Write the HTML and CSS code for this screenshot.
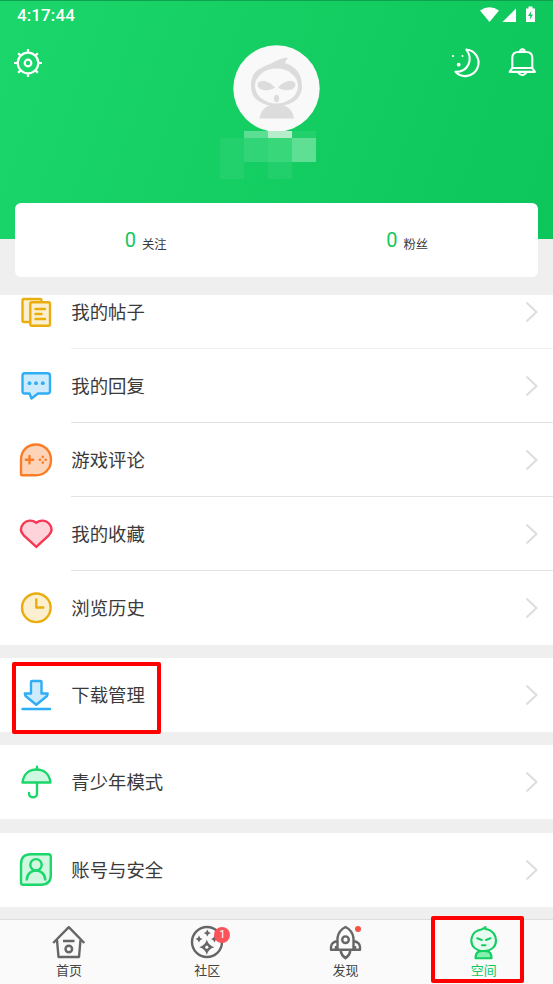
FILE: index.html
```html
<!DOCTYPE html>
<html lang="zh-CN">
<head>
<meta charset="utf-8">
<title>空间</title>
<link rel="stylesheet" href="styles.css">
</head>
<body>
<div class="app">
  <header class="hero">
    <div class="status">
      <span class="time">4:17:44</span>
      <svg class="status-icons" width="58" height="20" viewBox="0 0 58 20" fill="#fff">
        <path d="M0 4.600Q9.500-2.200 19 4.600L9.500 16Z"/>
        <path d="M22.500 16 36 2.500V16Z"/>
        <path d="M46 2.500h2.500V.500h4v2H55V16h-9Z"/>
        <path d="M51.500 4.500 48 10h2.300l-.800 4 3.600-5.500h-2.400Z" fill="#13c95f"/>
      </svg>
    </div>
    <div class="toolbar">
      <svg class="tool" width="30" height="30" viewBox="0 0 30 30" fill="none" stroke="#fff" stroke-width="2.200">
        <circle cx="15" cy="15" r="10.300"/><circle cx="15" cy="15" r="3.300"/>
        <path d="M15 1v4M15 25v4M1 15h4M25 15h4M5.200 5.200 7.600 7.600M22.400 22.400l2.400 2.400M5.200 24.800l2.400-2.400M22.400 7.600l2.400-2.400"/>
      </svg>
      <span class="tools-right">
        <svg width="32" height="32" viewBox="0 0 32 32" fill="none" stroke="#fff" stroke-width="2.100" stroke-linejoin="round">
          <path d="M16.300 2.500A13.300 13.300 0 1 1 5.500 24.800C17.500 25 24 13 16.300 2.500Z"/>
          <g fill="#fff" stroke="none"><circle cx="3" cy="9" r="1.100"/><circle cx="12.500" cy="9" r="1"/><circle cx="8.700" cy="17.700" r="1.900"/></g>
        </svg>
        <svg width="30" height="32" viewBox="0 0 30 32" fill="none" stroke="#fff" stroke-width="2.100" stroke-linejoin="round">
          <path d="M5.300 21V11Q5.300 5 11.300 5h8Q25.300 5 25.300 11V21L27.900 24.900H2.700L5.300 21H25.300M13 4.700a2.300 2.300 0 0 1 4.600 0M10.800 25.200q4.500 6 9 0"/>
        </svg>
      </span>
    </div>
    <svg class="avatar" width="102" height="135" viewBox="0 0 102 135">
      <circle cx="56.500" cy="43.500" r="43.200" fill="#f9f9f9"/>
      <path d="M39.500 73.500C40.500 64 48 59 56.500 59s16.500 5 17.500 14.500Z" fill="#dcdcdc"/>
      <path d="M31 41c0-16 10-18 21-23 6-3 12-6 16-5-1 2-3 3-3 5 9 3 17 9 17 23 0 14-12 20-25.500 20S31 55 31 41Z" fill="#dcdcdc"/>
      <ellipse cx="56.500" cy="41" rx="21.500" ry="17.500" fill="#f9f9f9"/>
      <path d="M55 42.500C48 35 41 35 38.500 37.500c-2 2-.500 6 3 7 4 1.500 10 .500 13.500-2ZM58 42.500C65 35 72 35 74.500 37.500c2 2 .500 6-3 7-4 1.500-10 .500-13.500-2Z" fill="#dcdcdc"/>
      <ellipse cx="56.500" cy="53.500" rx="2.600" ry="3.700" fill="#dcdcdc"/>
      <g fill="#fff" shape-rendering="crispEdges">
        <path d="M24 86h24v7H24Z" fill="#5bdf92"/><path d="M48 86h24v7H48Z" fill="#b6eccc"/><path d="M72 86h24v7H72Z" fill="#22d16c"/>
        <path d="M0 93h24v24H0Z" fill-opacity=".06"/><path d="M24 93h24v24H24Z" fill="#31d476"/><path d="M48 93h24v24H48Z" fill="#37d77a"/><path d="M72 93h24v24H72Z" fill="#5fdf94"/>
        <path d="M0 117h24v17H0ZM48 117h24v17H48Z" fill-opacity=".06"/>
      </g>
    </svg>
  </header>
  <section class="stats">
    <div class="stat"><b>0</b><span>关注</span></div>
    <div class="stat"><b>0</b><span>粉丝</span></div>
  </section>
  <main class="menu">
    <div class="group scrolled">
      <div class="row">
        <svg class="icon yellow" viewBox="0 0 40 40"><path d="M8 7h16q1.500 0 1.500 1.500V30H8q-1.500 0-1.500-1.500V8.500Q6.500 7 8 7Z"/><rect x="14.300" y="10.300" width="19.700" height="23.400" rx="1.500"/><path d="M19.500 17h9.500M19.500 22h6M19.500 27h9.500"/></svg>
        <span class="label">我的帖子</span><svg class="chevron" viewBox="0 0 12 20"><path d="m1.200 1.200 9.300 8.800-9.300 8.800"/></svg>
      </div>
      <div class="row">
        <svg class="icon blue" viewBox="0 0 40 40"><path d="M8.500 7.300h23q2.500 0 2.500 2.500V25q0 2.500-2.500 2.500H22l-6.500 5-2-5h-5Q6.500 27.500 6.500 25V9.800q0-2.500 2-2.500Z"/><g class="solid"><circle cx="13.500" cy="17.200" r="1.900"/><circle cx="20" cy="17.200" r="1.900"/><circle cx="26.800" cy="17.200" r="1.900"/></g></svg>
        <span class="label">我的回复</span><svg class="chevron" viewBox="0 0 12 20"><path d="m1.200 1.200 9.300 8.800-9.300 8.800"/></svg>
      </div>
      <div class="row">
        <svg class="icon orange" viewBox="0 0 40 40"><path d="M5 20C5 10.500 11.500 4.500 20 4.500S35 11 35 20s-6.500 15.300-15 15.300H6.200Q5 35.300 5 34Z"/><path d="M9.800 19.700h7.400M13.500 16V23.400"/><g class="solid"><circle cx="26.800" cy="16.800" r="1.300"/><circle cx="26.800" cy="22.600" r="1.300"/><circle cx="23.900" cy="19.700" r="1.300"/><circle cx="29.700" cy="19.700" r="1.300"/></g></svg>
        <span class="label">游戏评论</span><svg class="chevron" viewBox="0 0 12 20"><path d="m1.200 1.200 9.300 8.800-9.300 8.800"/></svg>
      </div>
      <div class="row">
        <svg class="icon red" viewBox="0 0 40 40"><path d="M20.300 8.700C16 5.500 10.500 6.200 7.500 9.500c-3.500 4-3 8.500.5 12.200L20.300 32.800 32.500 21.700c3.500-3.700 4-8.200.5-12.200-3-3.300-8.500-4-12.700-.8Z" stroke-linejoin="miter"/></svg>
        <span class="label">我的收藏</span><svg class="chevron" viewBox="0 0 12 20"><path d="m1.200 1.200 9.300 8.800-9.300 8.800"/></svg>
      </div>
      <div class="row">
        <svg class="icon yellow" viewBox="0 0 40 40"><circle cx="20.300" cy="19.800" r="14.300"/><path class="line" d="M20.300 11.500v8h7"/></svg>
        <span class="label">浏览历史</span><svg class="chevron" viewBox="0 0 12 20"><path d="m1.200 1.200 9.300 8.800-9.300 8.800"/></svg>
      </div>
    </div>
    <div class="group">
      <div class="row">
        <svg class="icon blue" viewBox="0 0 40 40"><path d="M16 6h8.500q1 0 1 1v11.500h6.200L31 21 20.300 29.800 9.500 21l-.7-2.500H15V7q0-1 1-1Z"/><path d="M6.500 34h27.500"/></svg>
        <span class="label">下载管理</span><svg class="chevron" viewBox="0 0 12 20"><path d="m1.200 1.200 9.300 8.800-9.300 8.800"/></svg>
      </div>
    </div>
    <div class="group">
      <div class="row">
        <svg class="icon green" viewBox="0 0 40 40"><path d="M6.500 20.500C7.500 12 13 7.500 20.500 7.500S33.500 12 34.500 20.500Z"/><path class="line" d="M21 4.800v2.700M21 21v10.500c0 5-8 5-8 0v-.5"/></svg>
        <span class="label">青少年模式</span><svg class="chevron" viewBox="0 0 12 20"><path d="m1.200 1.200 9.300 8.800-9.300 8.800"/></svg>
      </div>
    </div>
    <div class="group">
      <div class="row">
        <svg class="icon green" viewBox="0 0 40 40"><path d="M15 4.300h17.500q2.300 0 2.300 2.300V25Q34.800 34.800 25 34.800H7.300Q5 34.800 5 32.500V14Q5 4.300 15 4.300Z"/><circle cx="20" cy="14.800" r="5.700"/><path class="line" d="M10.800 29.500c.7-12 17.700-12 18.400 0"/></svg>
        <span class="label">账号与安全</span><svg class="chevron" viewBox="0 0 12 20"><path d="m1.200 1.200 9.300 8.800-9.300 8.800"/></svg>
      </div>
    </div>
  </main>
  <nav class="tabs">
    <div class="tab">
      <svg class="tab-icon" viewBox="0 0 36 36"><path d="M2.200 19 17.800 3.200 33.300 19M6 16l1.500 17H28l1.500-17M12 17h11.500"/><circle cx="17.800" cy="25" r="3.300"/></svg>
      <span>首页</span>
    </div>
    <div class="tab">
      <svg class="tab-icon" viewBox="0 0 36 36"><circle cx="18" cy="18" r="15"/><path class="star" d="M18.300 5.500q.6 2.900 3.500 3.500-2.900.6-3.500 3.500-.6-2.900-3.500-3.500 2.900-.6 3.500-3.500ZM10 11.500q.6 2.900 3.500 3.500-2.900.6-3.500 3.500-.6-2.900-3.500-3.500 2.900-.6 3.500-3.500ZM25.500 11.500q.6 2.900 3.500 3.500-2.900.6-3.500 3.500-.6-2.900-3.500-3.500 2.900-.6 3.500-3.500Z"/><path class="spark" d="M17.800 15.500q1.500 6 7.500 7.700-6 1.700-7.500 7.500-1.500-5.800-7.500-7.500 6-1.700 7.500-7.700Z"/><circle cx="17.800" cy="23.200" r="1.600" fill="#fafafa" stroke="none"/></svg>
      <span>社区</span><i class="badge">1</i>
    </div>
    <div class="tab">
      <svg class="tab-icon" viewBox="0 0 36 36"><path d="M9.500 25.800V14Q10.500 6.500 17.500 3q7 3.500 8 11v11.800M9.500 17q-6.500 1.500-6.500 6v2.800h29v-2.800q0-4.500-6.500-6M12.700 27q.5 4 4.800 7.300 4.300-3.300 4.800-7.300M8 22v4M27 22v4"/><circle cx="17.500" cy="15.700" r="3.300"/></svg>
      <span>发现</span><i class="dot"></i>
    </div>
    <div class="tab active">
      <svg class="tab-icon" viewBox="0 0 36 36"><path d="M9.500 34.300c0-6.500 3.500-7.300 8.200-7.300s7.800.8 7.800 7.300Z" fill="#85efad"/><path d="M12 6.500Q17 5.500 19.500 3q-.5 1.500-.2 2C27 6 30 11.500 30 16.500S26.500 27 17.700 27 5.300 21.500 5.300 16.500 8.500 7.500 12 6.500Z" fill="#e8fbf0"/><path d="m11.200 14.300 4.500 1.700M24.500 14.300 20 16M16 21.300h3.500"/></svg>
      <span>空间</span>
    </div>
  </nav>
  <div class="mark mark-download"></div>
  <div class="mark mark-space"></div>
</div>
</body>
</html>
```
FILE: styles.css
```css
* { box-sizing: border-box; }
body { margin: 0; background: #efefef; font-family: Roboto, "Noto Sans CJK SC", sans-serif; color: #3a3a3a; }
svg { display: block; flex: none; }
.app { position: relative; width: 553px; height: 984px; overflow: hidden; display: flex; flex-direction: column; }

.hero { height: 238.5px; flex: none; background: linear-gradient(#10a04e, #10a04e) 0 0 / 100% 1px no-repeat, linear-gradient(110deg, #1bd66a, #0dc65b); display: flex; flex-direction: column; }
.status { height: 32px; display: flex; justify-content: space-between; padding: 6px 15px 0 17px; }
.time { color: #fff; font-size: 17px; font-weight: 500; line-height: 19px; letter-spacing: .1px; }
.toolbar { height: 62px; display: flex; justify-content: space-between; align-items: center; padding: 0 16px 0 13px; }
.tools-right { display: flex; gap: 25px; }
.avatar { margin: -49px 0 0 220px; }

.stats { position: relative; height: 74px; flex: none; margin: -35.500px 15px 18px; border-radius: 6px; background: #fff; display: flex; }
.stat { flex: 1; display: flex; justify-content: center; align-items: baseline; gap: 6px; padding-top: 24px; line-height: 26px; }
.stat b { font-weight: 400; font-size: 20px; color: #14c75f; }
.stat span { font-size: 12.300px; position: relative; top: 1.500px; }

.menu { flex: 1; display: flex; flex-direction: column; gap: 13.400px; overflow: hidden; }
.group { background: #fff; flex: none; }
.scrolled { margin-top: -20.500px; }
.row { height: 74px; display: flex; align-items: center; padding: 0 15px 0 16px; position: relative; }
.row + .row::before { content: ""; position: absolute; top: -1px; left: 71px; right: 0; height: 1px; background: #e3e3e3; }
.row:nth-child(2)::before { background: #f1f1f1; }
.icon { width: 40px; height: 40px; stroke: currentColor; stroke-width: 2.400; stroke-linejoin: round; stroke-linecap: round; }
.yellow { color: #e9ae0d; fill: #fbefd0; }
.blue { color: #2fadf5; fill: #ceebfb; }
.orange { color: #fb7c26; fill: #fed4b9; }
.red { color: #f63854; fill: #fed3da; }
.green { color: #1bd66b; fill: #d0f7e0; }
.solid { fill: currentColor; stroke: none; }
.line { fill: none; }
.label { flex: 1; margin-left: 15.300px; padding-top: 2px; font-size: 18.400px; line-height: 28px; }
.chevron { width: 12px; height: 20px; fill: none; stroke: #dedede; stroke-width: 2.200; stroke-linecap: round; stroke-linejoin: round; }

.tabs { height: 65px; flex: none; background: #fafafa; border-top: 1px solid #dedede; display: flex; }
.tab { flex: 1; position: relative; display: flex; flex-direction: column; align-items: center; padding-top: 4px; font-size: 13px; line-height: 18px; color: #444; }
.tab span { margin-top: 2px; }
.tab-icon { width: 36px; height: 36px; fill: none; stroke: #666; stroke-width: 2.400; stroke-linejoin: round; }
.tab-icon .star, .tab-icon .spark { fill: #666; stroke: none; }
.active { color: #10c95b; }
.active .tab-icon { stroke: #12ce61; stroke-linecap: round; stroke-width: 2.100; }
.badge { position: absolute; left: 76px; top: 7px; width: 16px; height: 16px; border-radius: 50%; background: #fa5359; color: #fff; font-size: 11px; font-style: normal; line-height: 16px; text-align: center; }
.dot { position: absolute; left: 78.500px; top: 6px; width: 6px; height: 6px; border-radius: 50%; background: #f65245; }

.mark { position: absolute; border: 4px solid #fe0000; border-radius: 2px; }
.mark-download { left: 12px; top: 662px; width: 149px; height: 72px; }
.mark-space { left: 431px; top: 916px; width: 93px; height: 67px; }
```
